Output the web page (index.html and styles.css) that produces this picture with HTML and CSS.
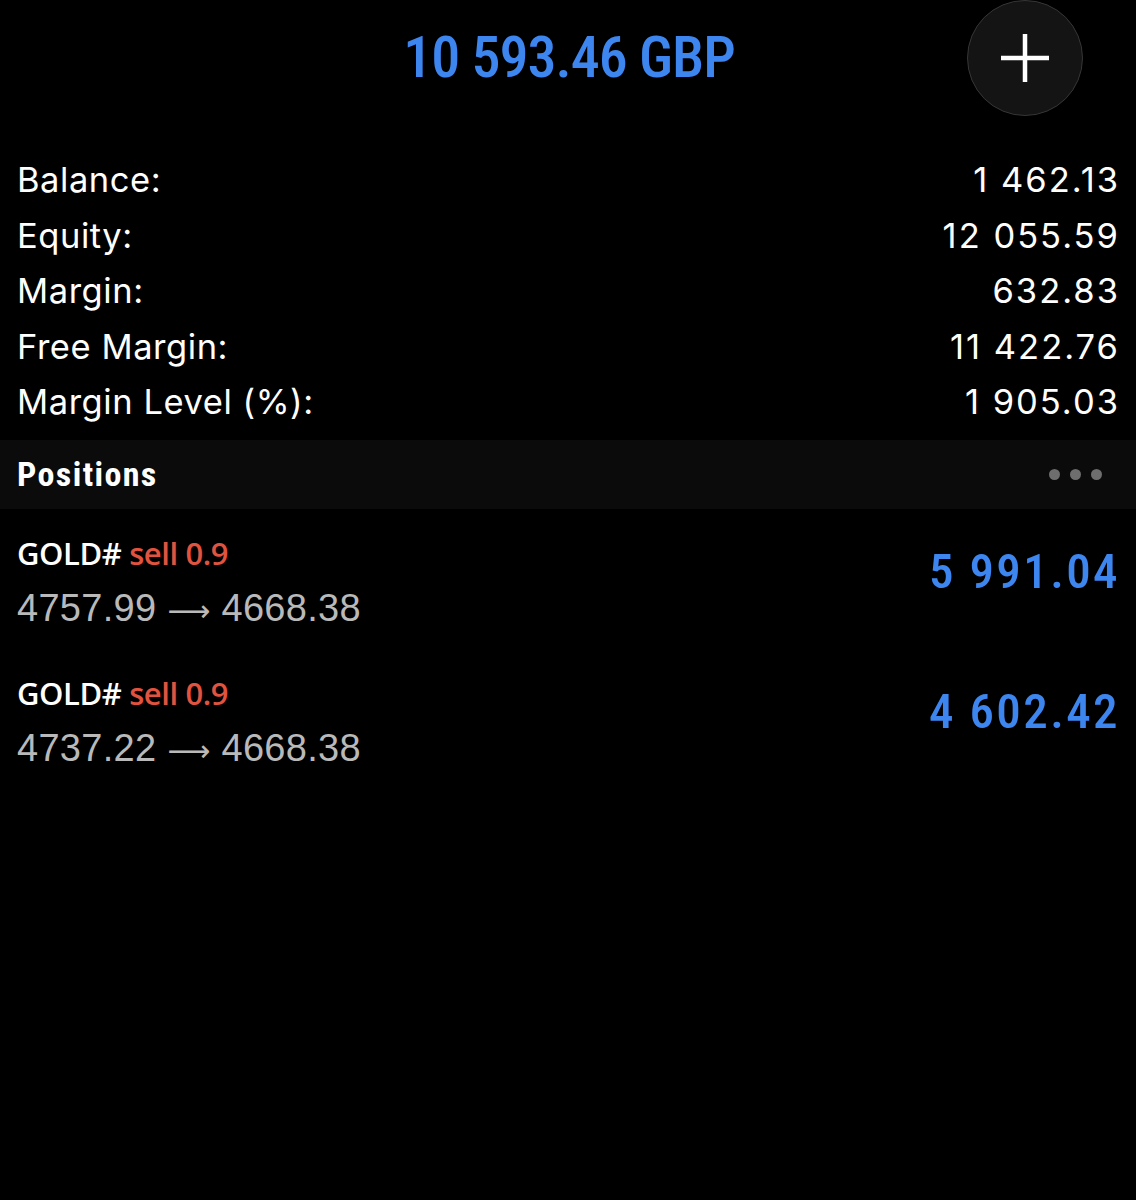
FILE: index.html
```html
<!DOCTYPE html>
<html lang="en">
<head>
    <meta charset="UTF-8">
    <meta name="viewport" content="width=device-width, initial-scale=1.0">
    <title>Trade</title>
    <link rel="stylesheet" href="styles.css">
</head>
<body>

    <header class="top">
        <div class="total">10 593.46 GBP</div>
        <button class="add" title="New order">
            <svg width="50" height="50" viewBox="0 0 50 50">
                <path d="M25 1 V49 M1 25 H49" stroke="#fff" stroke-width="4.5" fill="none"/>
            </svg>
        </button>
    </header>

    <div class="account">
        <div class="row"><span>Balance:</span><span class="value">1 462.13</span></div>
        <div class="row"><span>Equity:</span><span class="value">12 055.59</span></div>
        <div class="row"><span>Margin:</span><span class="value">632.83</span></div>
        <div class="row"><span>Free Margin:</span><span class="value">11 422.76</span></div>
        <div class="row"><span>Margin Level (%):</span><span class="value">1 905.03</span></div>
    </div>

    <div class="section">
        <span class="section-title">Positions</span>
        <span class="dots"><i></i><i></i><i></i></span>
    </div>

    <div class="positions">
        <div class="position">
            <div class="info">
                <div class="symbol">GOLD# <span class="sell">sell 0.9</span></div>
                <div class="prices">4757.99 <span class="arrow">⟶</span> 4668.38</div>
            </div>
            <div class="profit">5 991.04</div>
        </div>
        <div class="position">
            <div class="info">
                <div class="symbol">GOLD# <span class="sell">sell 0.9</span></div>
                <div class="prices">4737.22 <span class="arrow">⟶</span> 4668.38</div>
            </div>
            <div class="profit">4 602.42</div>
        </div>
    </div>

</body>
</html>
```

FILE: styles.css
```css
body {
    margin: 0;
    background-color: #000;
    color: #fff;
    font-family: Inter, "Liberation Sans", sans-serif;
}
.top {
    position: relative;
    height: 114px;
    display: flex;
    align-items: center;
    justify-content: center;
}
.total {
    font-family: "Roboto Condensed", Roboto, sans-serif;
    font-weight: 500;
    font-size: 58px;
    letter-spacing: -1px;
    color: #3d86f0;
    margin-left: 2px;
}
.add {
    position: absolute;
    top: 0;
    right: 53px;
    width: 116px;
    height: 116px;
    border-radius: 50%;
    border: 1.5px solid #363636;
    background-color: #141414;
    display: flex;
    align-items: center;
    justify-content: center;
    padding: 0;
}
.account {
    margin-top: 38px;
    padding: 0 18px 0 17px;
}
.row {
    height: 55.5px;
    display: flex;
    align-items: center;
    justify-content: space-between;
    font-size: 34.5px;
    letter-spacing: 0.55px;
}
.row .value {
    letter-spacing: 2px;
    margin-right: -2px;
}
.section {
    margin-top: 10px;
    height: 69px;
    background-color: #0b0b0b;
    display: flex;
    align-items: center;
    justify-content: space-between;
    padding: 0 34px 0 17px;
}
.section-title {
    font-family: "Roboto Condensed", Roboto, sans-serif;
    font-weight: 700;
    font-size: 34px;
    letter-spacing: 1.4px;
}
.dots {
    display: flex;
    gap: 10px;
}
.dots i {
    width: 11px;
    height: 11px;
    border-radius: 50%;
    background-color: #6e6e6e;
}
.position {
    display: flex;
    justify-content: space-between;
    align-items: flex-start;
    padding: 22px 18px 18px 17px;
}
.symbol {
    font-family: "Open Sans", "Roboto Condensed", sans-serif;
    font-weight: 600;
    font-size: 31px;
    line-height: 44px;
    letter-spacing: -0.4px;
}
.sell {
    color: #e0533f;
}
.prices {
    margin-top: 10px;
    font-family: "Liberation Sans", Arial, sans-serif;
    font-size: 38px;
    line-height: 46px;
    letter-spacing: 0.3px;
    color: #b9b9b9;
}
.arrow {
    font-family: "DejaVu Sans", sans-serif;
    font-size: 30px;
    line-height: 1;
}
.profit {
    margin-top: 13px;
    font-family: "Roboto Condensed", Roboto, sans-serif;
    font-weight: 500;
    font-size: 49px;
    line-height: 56px;
    letter-spacing: 2.4px;
    margin-right: -2px;
    color: #3d86f0;
}
```
